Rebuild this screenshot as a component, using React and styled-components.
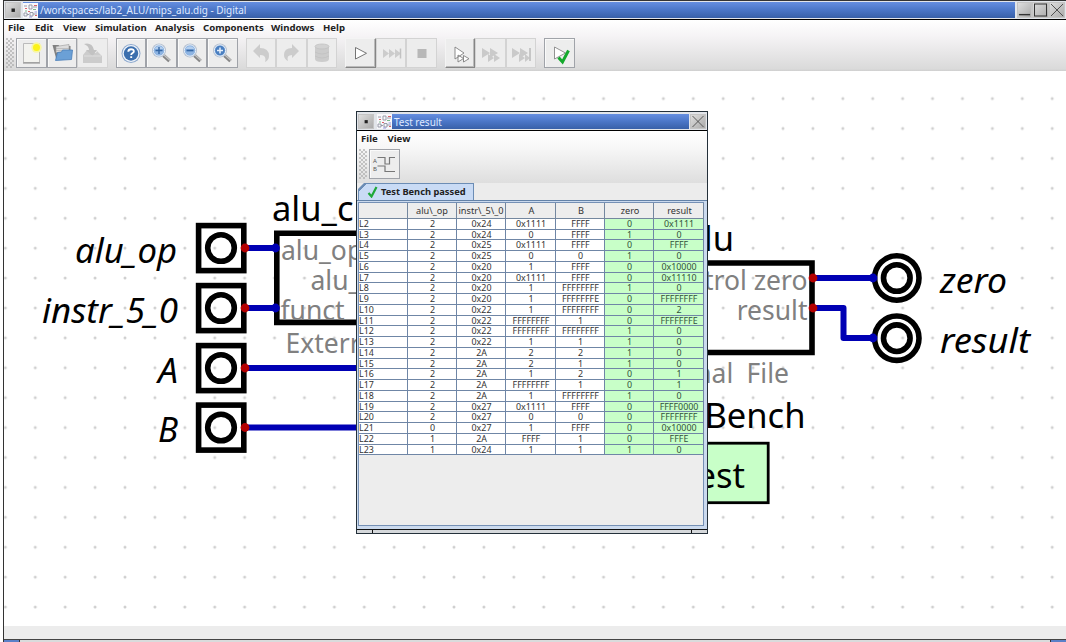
import React from "react";
import styled, { createGlobalStyle, css } from "styled-components";

const Global = createGlobalStyle`
  * { box-sizing: border-box; }
  body { margin: 0; background: #fff; overflow: hidden; font-family: "Noto Sans", sans-serif; color: #222; }
`;

const Desktop = styled.div`
  position: relative;
  width: 1066px;
  height: 642px;
  padding-left: 3px;
  overflow: hidden;
  background: #fff;
`;
const MainWindow = styled.div`
  height: 642px;
  border-left: 1px solid #333;
  display: flex;
  flex-direction: column;
`;
const TitleBar = styled.div`
  display: flex;
  align-items: stretch;
  height: ${(p) => (p.$dialog ? 19 : 20)}px;
  flex: none;
  padding: ${(p) => (p.$dialog ? "2px 1px 1px" : "1px 1px 1px")};
  border-top: ${(p) => (p.$dialog ? 0 : 1)}px solid #333;
  border-bottom: 1px solid #000;
  background: #e2e5ea;
`;
const FrameButton = styled.div`
  width: ${(p) => p.$w || 16}px;
  flex: none;
  background: linear-gradient(135deg, #dedede, #aaa);
  border: 1px solid #c4c4c4;
  svg { display: block; width: 100%; height: 100%; }
`;
const TitleFill = styled.div`
  flex: 1;
  display: flex;
  align-items: center;
  margin-left: ${(p) => (p.$dialog ? 3 : 2)}px;
  margin-right: ${(p) => p.$right || 2}px;
  background: linear-gradient(#658ee0, #4b76c7 50%, #3860a8);
  color: #dfe9ff;
  font-size: 9.95px;
  line-height: 14px;
  white-space: pre;
`;
const AppIcon = styled.svg`
  width: 15px;
  height: 15px;
  flex: none;
  margin-right: 2px;
`;
const Chrome = styled.div`
  height: 51px;
  flex: none;
  background: linear-gradient(#fff, #f6f4f6 30%, #dadada 96%, #cfcfcf);
  ${(p) => p.$dialog && css`height: 52px; background: linear-gradient(#fff, #f6f6f6 35%, #dedede);`}
`;
const MenuBar = styled.div`
  display: flex;
  height: 18px;
  padding-left: 4px;
  gap: 10px;
  font-size: 9.6px;
  font-weight: 700;
  line-height: 16px;
`;
const MenuItem = styled.span`
  width: ${(p) => p.$w}px;
  white-space: nowrap;
`;
const ToolBar = styled.div`
  display: flex;
  height: 31px;
  padding-left: 2px;
  gap: 8px;
`;
const Grip = styled.div`
  width: 8px;
  height: 30px;
  margin-right: -6px;
  background-image: radial-gradient(circle at 1px 1px, #aaa 0.6px, transparent 0.9px), radial-gradient(circle at 1px 1px, #aaa 0.6px, transparent 0.9px);
  background-size: 4px 4px;
  background-position: 0 0, 2px 2px;
`;
const Group = styled.div`
  display: flex;
`;
const buttonLook = {
  off: css`border-color: #d3d3d3;`,
  on: css`border-color: #a0a3a9; box-shadow: inset 1px 1px #fafafa;`,
  raised: css`border-color: #f4f4f4 #858585 #858585 #f4f4f4; box-shadow: inset -1px -1px #bbb;`,
};
const ToolButton = styled.div`
  width: 30.5px;
  height: 30px;
  border: 1px solid;
  background: #ededed;
  ${(p) => buttonLook[p.$look]}
  svg { display: block; width: 30px; height: 30px; margin: -1px; }
`;
const CanvasArea = styled.svg`
  display: block;
  width: 1062px;
  height: 555px;
  flex: none;
`;
const StatusBar = styled.div`
  height: 13px;
  flex: none;
  background: #ececec;
`;
const BottomFrame = styled.div`
  display: flex;
  justify-content: space-between;
  height: 3px;
  flex: none;
  border-top: 1px solid #444;
  background: #d9dbdc;
`;
const Corner = styled.div`
  width: 16px;
  background: #5a80c8;
  border: 0 solid #333;
  border-width: ${(p) => (p.$end ? "0 0 0 1px" : "0 1px 0 0")};
`;

const Dialog = styled.div`
  position: absolute;
  left: 356px;
  top: 111px;
  width: 352px;
  height: 423px;
  display: flex;
  flex-direction: column;
  border: 1px solid #24303a;
  background: #ededed;
`;
const Tabs = styled.div`
  display: flex;
  height: 17px;
  flex: none;
  padding-left: 1px;
  align-items: flex-end;
  background: #ececec;
`;
const Tab = styled.div`
  display: flex;
  align-items: center;
  width: 116px;
  height: 17px;
  gap: 3px;
  padding: 0 0 1px 8px;
  background: linear-gradient(135deg, #6c8db5 5px, #c9dbf5 5.500px);
  border: 1px solid #6c8db5;
  border-bottom: 0;
  clip-path: polygon(6px 0, 100% 0, 100% 100%, 0 100%, 0 6px);
  font-size: 9.3px;
  font-weight: 700;
  line-height: 14px;
  white-space: nowrap;
  svg { width: 11px; height: 12px; flex: none; }
`;
const TabBody = styled.div`
  flex: 1;
  min-height: 0;
  padding: 1px 3px 2px 1px;
  border: 0 solid #6382a8;
  border-top-width: 1px;
  background: #cbdaee;
`;
const ScrollPane = styled.div`
  height: 324px;
  border: 1px solid #7590b5;
  background: #ededed;
`;
const HeaderRow = styled.div`
  display: grid;
  grid-template-columns: 49px 49px 49px 50px 49px 49px 50px;
  height: 16px;
`;
const HeadCell = styled.div`
  padding-left: ${(p) => (p.$shift ? 2 : 0)}px;
  border-right: 1px solid #74879f;
  border-bottom: 1px solid #74879f;
  font-size: 9.2px;
  line-height: 16px;
  text-align: center;
  white-space: nowrap;
  overflow: hidden;
  color: #333;
`;
const Row = styled(HeaderRow)`
  height: ${(p) => (p.$short ? 10 : 11)}px;
  line-height: ${(p) => (p.$short ? 9 : 10)}px;
`;
const Cell = styled.div`
  padding-left: ${(p) => (p.$left ? 0 : 1)}px;
  border-right: 1px solid #6f86a6;
  border-bottom: 1px solid #6f86a6;
  background: ${(p) => (p.$pass ? "#c8ffc8" : "#fff")};
  color: ${(p) => (p.$pass ? "#31523a" : "#333")};
  font-size: 8.9px;
  text-align: ${(p) => (p.$left ? "left" : "center")};
  white-space: nowrap;
`;
const DialogFoot = styled.div`
  display: flex;
  justify-content: space-between;
  height: 4px;
  flex: none;
  border-top: 1px solid #111;
  background: #d5d8db;
  padding: 0 15px;
`;
const FootMark = styled.div`
  width: 1px;
  background: #111;
`;

const CircuitMark = () => (
  <AppIcon viewBox="0 0 15 15">
    <rect width="15" height="15" fill="#f8f8fb" />
    <g fill="none" stroke="#8f92a0" strokeWidth=".9">
      <path d="M1 3h3M6 2v4h3V2zM10 4h4M1 10h3v3H1zM4 11.500h2M7 9.500h3v3.500H7zM10 11h4" />
    </g>
    <path d="M2 5.500h2M11 2.500h3M5 8.500h2M12 12.500h2" stroke="#dc6068" />
    <path d="M10 6.500h3M2 8h2" stroke="#7cba88" />
    <path d="M11.500 9h2.500M6 14h3" stroke="#9595dd" />
  </AppIcon>
);
const Dot = () => (
  <svg viewBox="0 0 14 14"><rect x="5.500" y="5.500" width="3.400" height="3.400" fill="#222" /></svg>
);
const Cross = () => (
  <svg viewBox="0 0 14 14"><path d="M1 1l12 12M13 1L1 13" stroke="#444" strokeWidth=".9" fill="none" /></svg>
);

const Lens = ({ children }) => (
  <svg viewBox="0 0 30 30">
    <path d="M17.500 17.500l6 5.500" stroke="#858585" strokeWidth="3.600" />
    <path d="M18 17l6 5.500" stroke="#c4c4c4" strokeWidth="1.200" />
    <circle cx="13" cy="12.500" r="7" fill="#b4bfcf" />
    <circle cx="13" cy="12.500" r="5.700" fill="#8fb5e3" stroke="#e6eef7" />
    <path d="M8.500 11a5 5 0 0 1 9 0" fill="#b4cfee" />
    {children}
  </svg>
);
const icons = {
  fresh: (
    <svg viewBox="0 0 30 30">
      <path d="M7.500 5.500h16v19h-16z" fill="#f3f3ef" stroke="#bbb" />
      <path d="M7 25h17" stroke="#888" />
      <circle cx="20.500" cy="9.500" r="5.200" fill="#f8f6a0" />
      <circle cx="20.500" cy="9.500" r="3.500" fill="#fbf21c" />
    </svg>
  ),
  open: (
    <svg viewBox="0 0 30 30">
      <path d="M5.500 7h6l1 1h11v11l-14 3z" fill="#808080" />
      <path d="M9 8.500l13-2v8H9z" fill="#dcdcdc" stroke="#999" strokeWidth=".6" />
      <path d="M9 10.500h13M9 12.500h12" stroke="#aaa" strokeWidth=".6" />
      <path d="M10.500 14.500l4 -.5 1-2h10l-1 9.500-16 1z" fill="#6ba0d6" stroke="#4a7eb8" strokeWidth=".8" />
    </svg>
  ),
  save: (
    <svg viewBox="0 0 30 30" fill="#cccccc">
      <path d="M6 17l4-5h3v3h6l1-2 5 5v7H6z" />
      <path d="M7 6q8-2 10 6h3l-4.500 6-6.500-6h3q0-4-5-6z" fill="#c2c2c2" />
      <path d="M7 18h17" stroke="#dedede" />
    </svg>
  ),
  help: (
    <svg viewBox="0 0 30 30">
      <circle cx="15" cy="15.500" r="9.500" fill="#8da9ce" />
      <circle cx="15" cy="15.500" r="8.500" fill="#eef3f9" />
      <circle cx="15" cy="15.500" r="7.200" fill="#3b6fae" />
      <path d="M12.300 13.700q0-2.500 2.800-2.500t2.700 2.200c0 1.700-2.600 1.700-2.600 3.600M15.200 18.300v1.800" fill="none" stroke="#fff" strokeWidth="1.900" />
    </svg>
  ),
  zoomIn: <Lens><path d="M13 9v7M9.500 12.500h7" stroke="#3467a5" strokeWidth="1.400" /></Lens>,
  zoomOut: <Lens><path d="M9.500 12.500h7" stroke="#3467a5" strokeWidth="1.700" /></Lens>,
  zoomFit: <Lens><circle cx="13" cy="12.500" r="4.800" fill="#4a7fc0" /><path d="M13 9.500v6M10 12.500h6" stroke="#e6f0fb" strokeWidth="1.500" /></Lens>,
  undo: <svg viewBox="0 0 30 30"><path d="M7 13l7-7v4q9 0 9 8 0 4-4 6 2-7-5-7v3z" fill="#cccccc" /></svg>,
  redo: <svg viewBox="0 0 30 30"><path d="M23 13l-7-7v4q-8 0-8 7 0 4 4 6-2-6 4-6v3z" fill="#cccccc" /></svg>,
  trash: (
    <svg viewBox="0 0 30 30">
      <path d="M8 9v12q0 3 7 3t7-3V9z" fill="#cccccc" />
      <ellipse cx="15" cy="8.500" rx="7" ry="2.500" fill="#d2d2d2" stroke="#c2c2c2" strokeWidth=".8" />
      <path d="M8 14q7 4 14 0M8 18q7 4 14 0" stroke="#bfbfbf" fill="none" strokeWidth=".7" />
    </svg>
  ),
  play: <svg viewBox="0 0 30 30"><path d="M10.500 9.500v11.500l11-5.700z" fill="#fff" stroke="#666" strokeWidth=".9" /></svg>,
  fast: <svg viewBox="0 0 30 30"><path d="M7 11v9l6-4.500zM13 11v9l6-4.500zM19 11v9l6-4.500z" fill="#cccccc" /><path d="M24.500 10.500v10" stroke="#c2c2c2" strokeWidth="1.500" /></svg>,
  stop: <svg viewBox="0 0 30 30"><rect x="11.500" y="11" width="9" height="9" fill="#b8b8b8" /></svg>,
  micro: <svg viewBox="0 0 30 30"><path d="M10 9v12l9-6zM13 17v7l5.500-3.500zM18.500 17.500v6.500l5.500-3.300z" fill="#fff" stroke="#808080" strokeWidth=".9" /></svg>,
  fastStep: <svg viewBox="0 0 30 30"><path d="M7 10v10l8-5zM15 10v10l8-5zM13 16v8l6-4zM19 16v8l6-4z" fill="#cacaca" /></svg>,
  fastEnd: <svg viewBox="0 0 30 30"><path d="M6 10v10l8-5zM14 10v10l8-5zM13 16v8l6-4zM19 16v8l5-4z" fill="#cacaca" /><path d="M24 10v13" stroke="#c2c2c2" strokeWidth="1.800" /></svg>,
  test: <svg viewBox="0 0 30 30"><path d="M10.500 9v12l11-6z" fill="#fff" stroke="#888" strokeWidth=".9" /><path d="M14.500 19.500l4 4.500 6-11.500" fill="none" stroke="#14a92c" strokeWidth="3" /></svg>,
  wave: (
    <svg viewBox="0 0 30 30">
      <path d="M8.500 8.500h7.500v6.500h4.500V8.500H26M8.500 17h7.500v5.500h10" fill="none" stroke="#777" strokeWidth="1.200" />
      <text x="4" y="13.500" fontSize="6" fill="#555">A</text>
      <text x="4" y="22" fontSize="6" fill="#555">B</text>
    </svg>
  ),
};

const groups = [
  [["fresh", "on"], ["open", "on"], ["save", "off"]],
  [["help", "on"], ["zoomIn", "on"], ["zoomOut", "on"], ["zoomFit", "on"]],
  [["undo", "off"], ["redo", "off"], ["trash", "off"]],
  [["play", "raised"], ["fast", "off"], ["stop", "off"]],
  [["micro", "raised"], ["fastStep", "off"], ["fastEnd", "off"]],
  [["test", "on"]],
];
const menus = [["File", 17], ["Edit", 18], ["View", 22], ["Simulation", 50], ["Analysis", 38], ["Components", 58], ["Windows", 42], ["Help", 22]];

const inputs = [
  { name: "alu_op", y: 248, x: 75, w: 102 },
  { name: "instr_5_0", y: 308, x: 42, w: 136 },
  { name: "A", y: 368, x: 158, w: 20 },
  { name: "B", y: 427.5, x: 158, w: 20 },
];
const outputs = [
  { name: "zero", y: 278, x: 940, w: 67 },
  { name: "result", y: 338.2, x: 940, w: 90 },
];

const Circuit = () => (
  <CanvasArea viewBox="4 71 1062 555" fontFamily='"Noto Sans", sans-serif'>
    <defs>
      <pattern id="grid" x="-9.600" y="83.600" width="29.910" height="29.910" patternUnits="userSpaceOnUse">
        <circle cx="14.950" cy="14.950" r="1.500" fill="#cfcfcf" />
      </pattern>
    </defs>
    <rect x="4" y="71" width="1062" height="555" fill="#fff" />
    <rect x="4" y="71" width="1062" height="555" fill="url(#grid)" />
    <g stroke="#0000b4" strokeWidth="6" fill="none" strokeLinejoin="round">
      <path d="M245 248h31M245 308h31M245 368h160M245 427.500h160M813 278h62M813 308h30.500v30H875" />
    </g>
    <g fill="none" stroke="#000" strokeWidth="5.600">
      <path d="M276.800 233.200H420V322.400H276.800zM600 263H812V352.500H600z" />
      {inputs.map((p) => (
        <g key={p.name}>
          <rect x="198.600" y={p.y - 22.4} width="45.200" height="45" />
          <circle cx="221" cy={p.y} r="13.300" />
        </g>
      ))}
      {outputs.map((p) => (
        <g key={p.name}>
          <circle cx="896.800" cy={p.y} r="22.200" />
          <circle cx="896.800" cy={p.y} r="13.300" />
        </g>
      ))}
    </g>
    <rect x="640" y="443.200" width="128.200" height="59.500" fill="#c8ffc8" stroke="#000" strokeWidth="2.800" />
    <g fill="#b40000">
      {inputs.map((p) => <circle key={p.name} cx="245" cy={p.y} r="4.400" />)}
      <circle cx="813" cy="278" r="4.400" />
      <circle cx="813" cy="308" r="4.400" />
    </g>
    <g fill="#0000b4">
      <circle cx="275.500" cy="248" r="4.400" />
      <circle cx="275.500" cy="308" r="4.400" />
      <circle cx="873" cy="278" r="4.400" />
      <circle cx="873" cy="338" r="4.400" />
    </g>
    <g fontSize="34.500" fontStyle="italic">
      {[...inputs, ...outputs].map((p) => (
        <text key={p.name} x={p.x} y={p.y + 14.5} textLength={p.w} lengthAdjust="spacingAndGlyphs">{p.name}</text>
      ))}
    </g>
    <g fontSize="34.500">
      <text x="272" y="221">alu_c</text>
      <text x="734" y="251" textAnchor="end">lu</text>
      <text x="805.500" y="428" textAnchor="end">Bench</text>
      <text x="745" y="488" textAnchor="end">est</text>
    </g>
    <g fontSize="26.500" fill="#808080">
      <text x="281" y="260">alu_op</text>
      <text x="310.500" y="290">alu_</text>
      <text x="280.500" y="319.500">funct</text>
      <text x="285.500" y="353">Exterr</text>
      <text x="807.500" y="290" textAnchor="end">trol zero</text>
      <text x="807.500" y="320" textAnchor="end">result</text>
      <text x="789" y="383" textAnchor="end" wordSpacing="6.500">nal File</text>
    </g>
  </CanvasArea>
);

const heads = ["", "alu\\_op", "instr\\_5\\_0", "A", "B", "zero", "result"];
const rows = `L2 2 0x24 0x1111 FFFF 0 0x1111
L3 2 0x24 0 FFFF 1 0
L4 2 0x25 0x1111 FFFF 0 FFFF
L5 2 0x25 0 0 1 0
L6 2 0x20 1 FFFF 0 0x10000
L7 2 0x20 0x1111 FFFF 0 0x11110
L8 2 0x20 1 FFFFFFFF 1 0
L9 2 0x20 1 FFFFFFFE 0 FFFFFFFF
L10 2 0x22 1 FFFFFFFF 0 2
L11 2 0x22 FFFFFFFF 1 0 FFFFFFFE
L12 2 0x22 FFFFFFFF FFFFFFFF 1 0
L13 2 0x22 1 1 1 0
L14 2 2A 2 2 1 0
L15 2 2A 2 1 1 0
L16 2 2A 1 2 0 1
L17 2 2A FFFFFFFF 1 0 1
L18 2 2A 1 FFFFFFFF 1 0
L19 2 0x27 0x1111 FFFF 0 FFFF0000
L20 2 0x27 0 0 0 FFFFFFFF
L21 0 0x27 1 FFFF 0 0x10000
L22 1 2A FFFF 1 0 FFFE
L23 1 0x24 1 1 1 0`.split("\n").map((r) => r.split(" "));

const ResultDialog = () => (
  <Dialog>
    <TitleBar $dialog>
      <FrameButton $w={16}><Dot /></FrameButton>
      <TitleFill $dialog $right={1}><CircuitMark />Test result</TitleFill>
      <FrameButton $w={16}><Cross /></FrameButton>
    </TitleBar>
    <Chrome $dialog>
      <MenuBar><MenuItem $w={16.5}>File</MenuItem><MenuItem>View</MenuItem></MenuBar>
      <ToolBar><Grip /><Group><ToolButton $look="on">{icons.wave}</ToolButton></Group></ToolBar>
    </Chrome>
    <Tabs>
      <Tab>
        <svg viewBox="0 0 10 12"><path d="M1 7l3 3.500L9 1" fill="none" stroke="#1ea838" strokeWidth="2.200" /></svg>
        Test Bench passed
      </Tab>
    </Tabs>
    <TabBody>
      <ScrollPane>
        <HeaderRow>{heads.map((h, i) => <HeadCell key={i} $shift={i > 2}>{h}</HeadCell>)}</HeaderRow>
        {rows.map((r, n) => (
          <Row key={r[0]} $short={n % 4 === 1}>{r.map((v, i) => <Cell key={i} $left={i === 0} $pass={i > 4}>{v}</Cell>)}</Row>
        ))}
      </ScrollPane>
    </TabBody>
    <DialogFoot><FootMark /><FootMark /></DialogFoot>
  </Dialog>
);

export default function App() {
  return (
    <Desktop>
      <Global />
      <MainWindow>
        <TitleBar>
          <FrameButton $w={16}><Dot /></FrameButton>
          <TitleFill><CircuitMark />/workspaces/lab2_ALU/mips_alu.dig - Digital</TitleFill>
          <FrameButton $w={15}><svg viewBox="0 0 14 14"><path d="M1 12h12" stroke="#333" strokeWidth="1.500" /></svg></FrameButton>
          <FrameButton $w={17}><svg viewBox="0 0 14 14"><rect x="1" y="1" width="12" height="12" fill="none" stroke="#333" /></svg></FrameButton>
          <FrameButton $w={16}><Cross /></FrameButton>
        </TitleBar>
        <Chrome>
          <MenuBar>{menus.map(([m, w]) => <MenuItem key={m} $w={w}>{m}</MenuItem>)}</MenuBar>
          <ToolBar>
            <Grip />
            {groups.map((g, i) => (
              <Group key={i}>{g.map(([name, look]) => <ToolButton key={name} $look={look}>{icons[name]}</ToolButton>)}</Group>
            ))}
          </ToolBar>
        </Chrome>
        <Circuit />
        <StatusBar />
        <BottomFrame><Corner /><Corner $end /></BottomFrame>
      </MainWindow>
      <ResultDialog />
    </Desktop>
  );
}
